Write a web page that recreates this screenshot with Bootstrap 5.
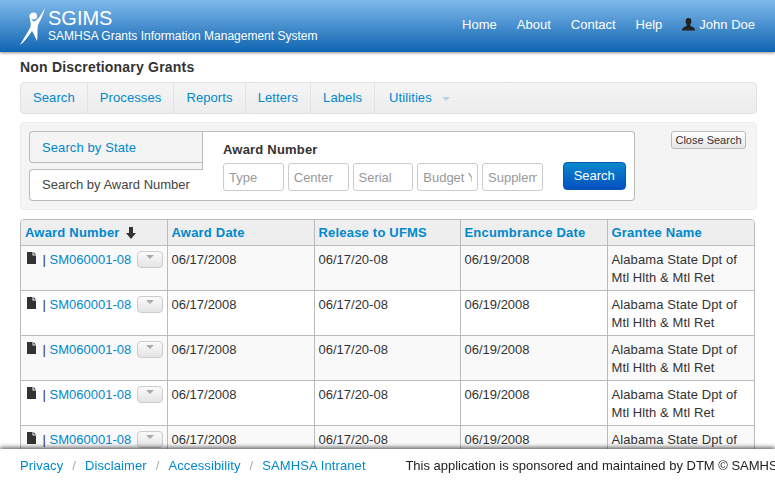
<!doctype html>
<html lang="en">

<head>
    <meta charset="utf-8">
    <meta name="viewport" content="width=device-width, initial-scale=1">
    <title>SGIMS</title>
    <link href="https://cdn.jsdelivr.net/npm/bootstrap@5.3.5/dist/css/bootstrap.min.css" rel="stylesheet">
    <style>
        html, body {
            height: 480px;
            overflow: hidden;
        }

        body {
            font-family: "Liberation Sans", Arial, sans-serif;
            font-size: 13px;
            line-height: 18px;
            letter-spacing: .1px;
            color: #333;
        }

        a {
            color: #0088cc;
            text-decoration: none;
        }

        .top-bar {
            height: 52px;
            padding: 0 20px;
            background: linear-gradient(to bottom, #7fb9ea, #0f65b2);
            box-shadow: 0 1px 3px rgba(0, 0, 0, .45);
            color: #fff;
        }

        .brand-text {
            margin-left: 2px;
        }

        .brand-name {
            font-size: 20px;
            line-height: 20px;
            margin-top: 8px;
            letter-spacing: 0;
        }

        .brand-sub {
            font-size: 12px;
            line-height: 16px;
            letter-spacing: 0;
        }

        .top-links a {
            color: #fff;
            margin-left: 20px;
            letter-spacing: 0;
        }

        .top-links {
            margin-top: -3px;
        }

        .page-title {
            font-size: 14px;
            font-weight: bold;
            line-height: 20px;
            margin: 5px 20px 5px;
            letter-spacing: .2px;
        }

        .sub-nav {
            margin: 0 18px 0 20px;
            height: 32px;
            background: linear-gradient(to bottom, #f5f5f5, #ececec);
            border: 1px solid #e2e2e2;
            border-radius: 4px;
        }

        .sub-nav a {
            display: block;
            line-height: 30px;
            padding: 0 12px;
            border-right: 1px solid #e2e2e2;
        }

        .sub-nav a.no-line {
            border-right: 0;
            padding-left: 14px;
        }

        .caret-down {
            display: inline-block;
            width: 0;
            height: 0;
            margin-left: 6px;
            vertical-align: middle;
            border-left: 4px solid transparent;
            border-right: 4px solid transparent;
            border-top: 4px solid #b5d5e8;
        }

        .search-well {
            margin: 8px 18px 9px 20px;
            height: 88px;
            padding: 8px 10px 8px 8px;
            background: #f4f4f4;
            border: 1px solid #ececec;
            border-radius: 4px;
        }

        .search-tabs {
            width: 605px;
            height: 70px;
        }

        .tab-col {
            width: 174px;
            flex: none;
        }

        .tab-state {
            height: 32px;
            line-height: 31px;
            padding-left: 12px;
            background: #f4f4f4;
            border: 1px solid #bbb;
            border-right: 0;
            border-radius: 4px 0 0 4px;
            display: block;
        }

        .tab-award {
            height: 32px;
            margin-top: 6px;
            line-height: 30px;
            padding-left: 12px;
            background: #fff;
            color: #444;
            letter-spacing: 0;
            border: 1px solid #bbb;
            border-right: 0;
            border-radius: 4px 0 0 4px;
        }

        .tab-pane-box {
            flex: 1;
            background: #fff;
            border: 1px solid #bbb;
            border-left: 0;
            border-radius: 0 4px 4px 0;
            position: relative;
            padding: 9px 8px 0 20px;
        }

        .tab-pane-box::before {
            content: "";
            position: absolute;
            left: -1px;
            top: -1px;
            height: 39px;
            width: 1px;
            background: #bbb;
        }

        .field-label {
            font-weight: bold;
            line-height: 18px;
            margin-bottom: 4px;
            letter-spacing: .2px;
        }

        .award-input {
            width: 60.75px;
            height: 28px;
            padding: 3px 5px;
            font-size: 13px;
            border: 1px solid #ccc;
            border-radius: 3px;
        }

        .award-input::placeholder {
            color: #999;
            opacity: 1;
        }

        .search-btn {
            width: 63px;
            height: 28px;
            margin-left: 16px;
            margin-top: -1px;
            padding: 0;
            font-size: 13px;
            color: #fff;
            background: linear-gradient(to bottom, #0a88cc, #0550c0);
            border: 1px solid #0558b0;
            border-radius: 4px;
        }

        .close-btn {
            width: 75px;
            height: 18px;
            margin-left: 37px;
            padding: 0;
            font-size: 11px;
            line-height: 15px;
            letter-spacing: 0;
            color: #333;
            background: linear-gradient(to bottom, #fff, #e6e6e6);
            border: 1px solid #bbb;
            border-radius: 3px;
        }

        .grant-wrap {
            margin: 0 20px;
            width: 735px;
            border: 1px solid #bbb;
            border-radius: 4px;
            overflow: hidden;
        }

        .grant-table {
            table-layout: fixed;
            margin: 0;
            width: 100%;
            border-collapse: collapse;
            color: #333;
            font-size: 13px;
            line-height: 18px;
        }

        .grant-table th, .grant-table td {
            border: 1px solid #bbb;
            padding: 5px 4px 3px;
            vertical-align: top;
            letter-spacing: 0;
        }

        .grant-table th:nth-child(1), .grant-table th:nth-child(3) {
            width: 146px;
        }

        .grant-table th:nth-child(2), .grant-table th:nth-child(4) {
            width: 147px;
        }

        .grant-table tr > :first-child {
            border-left: 0;
            white-space: nowrap;
        }

        .grant-table tr > :last-child {
            border-right: 0;
        }

        .grant-table tbody tr > :last-child {
            letter-spacing: .1px;
        }

        .grant-table thead tr > * {
            border-top: 0;
            background: #eeeeee;
            height: 25px;
            padding: 4px 4px 2px;
            letter-spacing: .2px;
        }

        .grant-table tbody td {
            height: 45px;
        }

        .grant-table tbody tr:nth-child(odd) td {
            background: #f9f9f9;
        }

        .grant-table tbody tr:nth-child(even) td {
            background: #fff;
        }

        .sort-arrow {
            margin-left: 3px;
            margin-top: -2px;
        }

        .file-icon {
            margin: -4px 3px 0 2px;
        }

        .row-btn {
            display: inline-block;
            width: 26px;
            height: 17px;
            margin-left: 6px;
            padding: 0;
            vertical-align: top;
            background: linear-gradient(to bottom, #fbfbfb, #e4e4e4);
            border: 1px solid #ccc;
            border-radius: 4px;
            line-height: 10px;
        }

        .row-btn .caret-down {
            margin: 0;
            border-top-color: #aaa;
        }

        .page-foot {
            position: fixed;
            left: 0;
            right: 0;
            bottom: 0;
            height: 31px;
            padding: 8px 20px 0;
            background: #fff;
            box-shadow: 0 -2px 4px rgba(0, 0, 0, .55);
            white-space: nowrap;
            overflow: hidden;
            letter-spacing: .1px;
        }

        .foot-sep {
            color: #aaa;
            margin: 0 9px;
        }

        .foot-note {
            margin-left: 36px;
            color: #222;
            letter-spacing: 0;
        }
    </style>
</head>

<body>
    <nav class="top-bar d-flex justify-content-between align-items-center">
        <div class="d-flex align-self-start">
            <svg width="26" height="38" viewBox="0 0 26 38" class="mt-2" aria-hidden="true">
                <circle cx="13.5" cy="8" r="3.6" fill="#fff" />
                <path d="M9 5 C10 9 12 13 14 13.5 C17 13 21 7 25 0 C23 8 20 13 18 17 C17 22 18 27 17 33 C15 29 14 26 12 23 C8 29 4 34 0 37 C3 31 7 26 10 20 C11 17 11 15 10 12 C10 10 9 8 9 5 Z" fill="#fff" />
            </svg>
            <div class="brand-text">
                <div class="brand-name">SGIMS</div>
                <div class="brand-sub">SAMHSA Grants Information Management System</div>
            </div>
        </div>
        <div class="top-links d-flex align-items-center">
            <a href="#">Home</a>
            <a href="#">About</a>
            <a href="#">Contact</a>
            <a href="#">Help</a>
            <a href="#" class="d-flex align-items-center">
                <svg width="13" height="13" viewBox="0 0 13 13" class="me-1" aria-hidden="true">
                    <path d="M6.5 0 C8.6 0 9.6 1.6 9.4 3.6 C9.3 5 8.7 6 8.2 6.8 C8.2 8 9.5 8.6 11 9.2 C12.2 9.7 13 10.4 13 12.6 L0 12.6 C0 10.4 .8 9.7 2 9.2 C3.5 8.6 4.8 8 4.8 6.8 C4.3 6 3.7 5 3.6 3.6 C3.4 1.6 4.4 0 6.5 0 Z" fill="#222" />
                </svg>
                John Doe
            </a>
        </div>
    </nav>

    <div class="page-title">Non Discretionary Grants</div>

    <div class="sub-nav d-flex">
        <a href="#">Search</a>
        <a href="#">Processes</a>
        <a href="#">Reports</a>
        <a href="#">Letters</a>
        <a href="#">Labels</a>
        <a href="#" class="no-line">Utilities <span class="caret-down"></span></a>
    </div>

    <div class="search-well d-flex align-items-start">
        <div class="search-tabs d-flex">
            <div class="tab-col">
                <a href="#" class="tab-state">Search by State</a>
                <div class="tab-award">Search by Award Number</div>
            </div>
            <div class="tab-pane-box">
                <div class="field-label">Award Number</div>
                <div class="d-flex align-items-start gap-1">
                    <input class="award-input" placeholder="Type">
                    <input class="award-input" placeholder="Center">
                    <input class="award-input" placeholder="Serial">
                    <input class="award-input" placeholder="Budget Year">
                    <input class="award-input" placeholder="Supplement">
                    <button class="search-btn">Search</button>
                </div>
            </div>
        </div>
        <button class="close-btn">Close Search</button>
    </div>

    <div class="grant-wrap">
        <table class="grant-table">
            <thead>
                <tr>
                    <th><a href="#">Award Number</a>
                        <svg class="sort-arrow" width="10" height="12" viewBox="0 0 10 12" aria-hidden="true">
                            <path d="M3 0 H7 V6 H10 L5 12 L0 6 H3 Z" fill="#333" />
                        </svg>
                    </th>
                    <th><a href="#">Award Date</a></th>
                    <th><a href="#">Release to UFMS</a></th>
                    <th><a href="#">Encumbrance Date</a></th>
                    <th><a href="#">Grantee Name</a></th>
                </tr>
            </thead>
            <tbody id="grantRows"></tbody>
        </table>
    </div>

    <footer class="page-foot">
        <a href="#">Privacy</a><span class="foot-sep">/</span><a href="#">Disclaimer</a><span class="foot-sep">/</span><a href="#">Accessibility</a><span class="foot-sep">/</span><a href="#">SAMHSA Intranet</a>
        <span class="foot-note">This application is sponsored and maintained by DTM © SAMHSA</span>
    </footer>

    <script>
        let rows = '';
        for (let i = 0; i < 5; i++) {
            rows += '<tr>' +
                '<td><svg class="file-icon" width="9" height="12" viewBox="0 0 9 12"><path d="M0 0 H5.5 V3.5 H9 V12 H0 Z M6.5 0 L9 2.5 H6.5 Z" fill="#333"/></svg> | <a href="#">SM060001-08</a>' +
                '<span class="row-btn text-center"><span class="caret-down"></span></span></td>' +
                '<td>06/17/2008</td><td>06/17/20-08</td><td>06/19/2008</td>' +
                '<td>Alabama State Dpt of Mtl Hlth &amp; Mtl Ret</td>' +
                '</tr>';
        }
        document.getElementById('grantRows').innerHTML = rows;
    </script>

    <script src="https://cdn.jsdelivr.net/npm/bootstrap@5.3.5/dist/js/bootstrap.bundle.min.js"></script>
</body>

</html>
